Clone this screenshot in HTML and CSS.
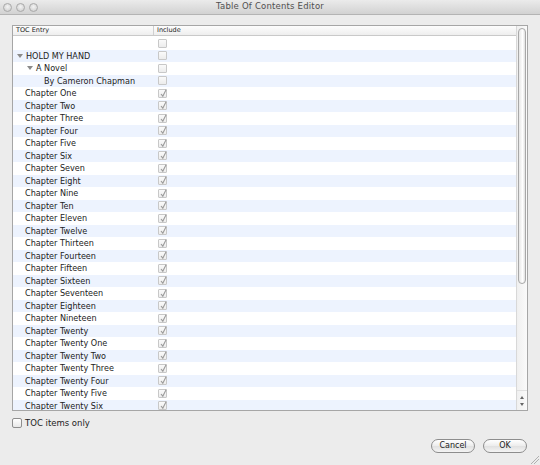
FILE: index.html
```html
<!DOCTYPE html>
<html>
<head>
<meta charset="utf-8">
<link rel="stylesheet" href="styles.css">
</head>
<body>
<div class="window">
  <div class="titlebar">
    <div class="lights"><span class="light"></span><span class="light"></span><span class="light"></span></div>
    <div class="title">Table Of Contents Editor</div>
  </div>
  <div class="body">
    <div class="table">
      <div class="main">
        <div class="header">
          <div class="c1">TOC Entry</div>
          <div class="c2">Include</div>
        </div>
        <div class="rows" id="rows"></div>
      </div>
      <div class="scrollbar">
        <div class="track">
          <div class="thumb"></div>
        </div>
        <div class="arrows">
          <span class="arr up"></span>
          <span class="arr down"></span>
        </div>
      </div>
    </div>
    <div class="opt">
      <span class="cb"></span><span class="optlabel">TOC items only</span>
    </div>
    <div class="buttons">
      <button class="btn">Cancel</button>
      <button class="btn">OK</button>
    </div>
  </div>
  <div class="grip"></div>
</div>
<script src="app.js"></script>
</body>
</html>
```
FILE: styles.css
```css
* { box-sizing: border-box; }
html, body { margin: 0; padding: 0; }
body { width: 540px; height: 465px; overflow: hidden; font-family: "DejaVu Sans", "Liberation Sans", sans-serif; }
.window { width: 540px; height: 465px; background: #ececec; position: relative; display: flex; flex-direction: column; }
.titlebar { height: 15px; background: linear-gradient(#ebebeb, #d2d2d2); border-bottom: 1px solid #b4b4b4; display: flex; align-items: center; position: relative; }
.lights { display: flex; gap: 4px; padding-left: 3px; }
.light { width: 9px; height: 9px; border-radius: 50%; background: radial-gradient(circle at 50% 40%, #f4f4f4, #c9c9c9); border: 1px solid #a9a9a9; }
.title { position: absolute; left: 0; right: 0; top: 1px; text-align: center; font-size: 8.5px; color: #505050; letter-spacing: 0.2px; }
.body { padding: 10px 12px 0 12px; display: flex; flex-direction: column; flex: 1; }
.table { height: 386px; width: 516px; border: 1px solid #a6a6a6; background: #fff; display: flex; }
.main { flex: 1; display: flex; flex-direction: column; overflow: hidden; }
.header { height: 10px; flex: none; display: flex; background: linear-gradient(#fdfdfd, #eeeeee); border-bottom: 1px solid #c9c9c9; font-size: 6.5px; color: #222; line-height: 9px; }
.header .c1 { width: 141px; padding-left: 3px; border-right: 1px solid #d0d0d0; }
.header .c2 { padding-left: 3px; }
.rows { flex: 1; padding-top: 1px; }
.row { height: 12.5px; display: flex; align-items: center; font-size: 8.1px; color: #222; }
.row:nth-child(even) { background: #edf3fe; }
.row .name { width: 141px; display: flex; align-items: center; white-space: nowrap; }
.row .chk { width: 9px; height: 9px; margin-left: 4px; border: 1px solid #c8c8c8; border-radius: 1px; background: linear-gradient(#fafafa, #ececec); position: relative; }
.row .chk svg { position: absolute; left: 0; top: -2px; }
.tri { width: 0; height: 0; border-left: 3px solid transparent; border-right: 3px solid transparent; border-top: 4.5px solid #8a8a8a; margin-right: 3px; }
.lvl0 { padding-left: 4px; }
.lvl1 { padding-left: 14px; }
.lvl2 { padding-left: 31px; }
.lvl0c { padding-left: 12px; }
.scrollbar { width: 11px; border-left: 1px solid #d8d8d8; background: linear-gradient(90deg, #f0f0f0, #fafafa); display: flex; flex-direction: column; }
.track { flex: 1; padding: 2px 1px 0 1px; }
.thumb { height: 256px; border: 1px solid #a8a8a8; border-radius: 4px; background: linear-gradient(90deg, #e6e6e6, #ffffff 60%, #e0e0e0); }
.arrows { height: 20px; display: flex; flex-direction: column; align-items: center; justify-content: center; gap: 4px; border-top: 1px solid #e0e0e0; }
.arr { width: 0; height: 0; border-left: 2.5px solid transparent; border-right: 2.5px solid transparent; }
.arr.up { border-bottom: 3.5px solid #666; }
.arr.down { border-top: 3.5px solid #666; }
.opt { display: flex; align-items: center; margin-top: 6px; height: 11px; }
.cb { width: 10px; height: 10px; border: 1px solid #8e8e8e; border-radius: 2px; background: linear-gradient(#ffffff, #e8e8e8); }
.optlabel { font-size: 8.5px; color: #222; margin-left: 3px; }
.buttons { display: flex; justify-content: flex-end; gap: 8px; margin-top: 11px; padding-right: 1px; }
.btn { width: 44px; height: 14px; padding: 0; border: 1px solid #8d8d8d; border-radius: 7px; background: linear-gradient(#ffffff, #ececec 50%, #e0e0e0 51%, #f4f4f4); font-family: "DejaVu Sans", "Liberation Sans", sans-serif; font-size: 8px; color: #222; line-height: 12px; }
.grip { position: absolute; right: 1px; bottom: 1px; width: 10px; height: 10px; background: linear-gradient(135deg, transparent 55%, #b0b0b0 55%, #b0b0b0 62%, transparent 62%, transparent 72%, #b0b0b0 72%, #b0b0b0 79%, transparent 79%); }
```
FILE: app.js
```js
var items = [
  ["", 0, false, "none"],
  ["HOLD MY HAND", 0, false, "tri"],
  ["A Novel", 1, false, "tri"],
  ["By Cameron Chapman", 2, false, "none"]
];
var ch = ["One","Two","Three","Four","Five","Six","Seven","Eight","Nine","Ten","Eleven","Twelve","Thirteen","Fourteen","Fifteen","Sixteen","Seventeen","Eighteen","Nineteen","Twenty","Twenty One","Twenty Two","Twenty Three","Twenty Four","Twenty Five","Twenty Six"];
ch.forEach(function (c) { items.push(["Chapter " + c, 3, true, "none"]); });
var rows = document.getElementById("rows");
var check = '<svg width="9" height="10" viewBox="0 0 9 10"><path d="M2 6 L3.8 8.2 L7.2 1.5" fill="none" stroke="#9a9a9a" stroke-width="1.1"/></svg>';
items.forEach(function (it) {
  var r = document.createElement("div");
  r.className = "row";
  var cls = it[1] === 0 ? "lvl0" : it[1] === 1 ? "lvl1" : it[1] === 2 ? "lvl2" : "lvl0c";
  var name = '<div class="name ' + cls + '">' + (it[3] === "tri" ? '<span class="tri"></span>' : '') + '<span>' + it[0] + '</span></div>';
  r.innerHTML = name + '<div class="chk">' + (it[2] ? check : '') + '</div>';
  rows.appendChild(r);
});
```
